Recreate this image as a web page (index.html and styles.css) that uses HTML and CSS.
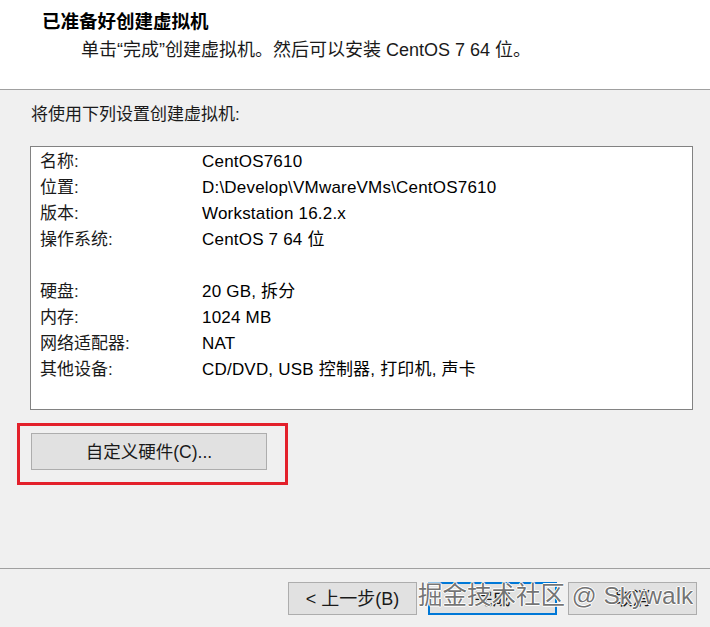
FILE: index.html
```html
<!doctype html>
<html lang="zh-CN">
<head>
    <meta charset="utf-8">
    <title>新建虚拟机向导</title>
    <link rel="stylesheet" href="styles.css">
</head>
<body>
    <div class="wizard">
        <header class="wizard-head">
            <h1>已准备好创建虚拟机</h1>
            <p>单击“完成”创建虚拟机。然后可以安装 CentOS 7 64 位。</p>
        </header>

        <main class="wizard-body">
            <p class="intro">将使用下列设置创建虚拟机:</p>

            <dl class="summary">
                <dt>名称:</dt><dd>CentOS7610</dd>
                <dt>位置:</dt><dd>D:\Develop\VMwareVMs\CentOS7610</dd>
                <dt>版本:</dt><dd>Workstation 16.2.x</dd>
                <dt>操作系统:</dt><dd>CentOS 7 64 位</dd>
                <dt class="gap"></dt><dd class="gap"></dd>
                <dt>硬盘:</dt><dd>20 GB, 拆分</dd>
                <dt>内存:</dt><dd>1024 MB</dd>
                <dt>网络适配器:</dt><dd>NAT</dd>
                <dt>其他设备:</dt><dd>CD/DVD, USB 控制器, 打印机, 声卡</dd>
            </dl>

            <div class="marked">
                <button class="btn btn-custom">自定义硬件(C)...</button>
            </div>
        </main>

        <footer class="wizard-foot">
            <button class="btn">&lt; 上一步(B)</button>
            <button class="btn btn-default">完成</button>
            <button class="btn">取消</button>
        </footer>

        <div class="watermark">掘金技术社区 @ Skywalk</div>
    </div>
</body>
</html>
```

FILE: styles.css
```css
/* reset stuff */
html {
    box-sizing: border-box;
}

*, *:before, *:after {
    box-sizing: inherit;
}

body, h1, p, dl, dd {
    margin: 0;
    padding: 0;
    font-weight: normal;
}

/* dialog */
:root {
    --face: #f0f0f0;
    --text: #1a1a1a;
    --btn-face: #e1e1e1;
    --btn-edge: #adadad;
}

body {
    font-family: "Liberation Sans", "Noto Sans CJK SC", sans-serif;
    font-size: 17px;
    line-height: 26px;
    color: var(--text);
    background: var(--face);
}

.wizard {
    position: relative;
    width: 710px;
    height: 627px;
    display: flex;
    flex-direction: column;
}

.wizard-head {
    height: 90px;
    background: #fff;
    border-bottom: 1px solid #a0a0a0;
    padding-top: 9px;
}

.wizard-head h1 {
    font-size: 18.5px;
    font-weight: bold;
    margin-left: 42px;
    color: #000;
}

.wizard-head p {
    font-size: 18px;
    margin: 2px 0 0 81px;
}

.wizard-body {
    height: 478px;
    padding-top: 12px;
}

.intro {
    margin-left: 31px;
}

.summary {
    display: grid;
    grid-template-columns: 162px 1fr;
    grid-auto-rows: 26px;
    margin: 18px 0 0 30px;
    width: 663px;
    height: 264px;
    padding: 2px 9px 0;
    background: #fff;
    border: 1px solid #828282;
    align-content: start;
}

.summary dd {
    color: #000;
    letter-spacing: 0.2px;
}

/* red annotation frame around the hardware button */
.marked {
    display: inline-block;
    margin: 13px 0 0 17px;
    padding: 7px 18px 12px 11px;
    border: 3px solid #e3202b;
}

.btn {
    font: inherit;
    font-size: 18px;
    line-height: 20px;
    color: var(--text);
    background: var(--btn-face);
    border: 1px solid var(--btn-edge);
    padding: 0;
    width: 129px;
    height: 33px;
}

.btn-custom {
    display: block;
    width: 236px;
    height: 37px;
    font-size: 17.5px;
}

.btn-default {
    border: 2px solid #0078d7;
}

.wizard-foot {
    flex: 1;
    border-top: 1px solid #a0a0a0;
    display: flex;
    justify-content: flex-end;
    align-items: flex-start;
    gap: 11px;
    padding: 13px 13px 0 0;
}

.watermark {
    position: absolute;
    left: 418px;
    top: 580px;
    font-size: 24.5px;
    line-height: 32px;
    color: rgba(70, 70, 70, 0.75);
    text-shadow: 1px 0 0 #fff, -1px 0 0 #fff, 0 1px 0 #fff, 0 -1px 0 #fff;
    white-space: nowrap;
}
```
